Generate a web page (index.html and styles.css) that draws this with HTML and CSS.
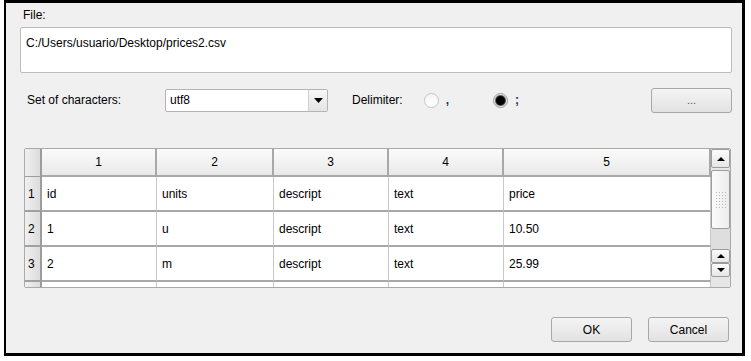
FILE: index.html
```html
<!DOCTYPE html>
<html>
<head>
<meta name="viewport" content="width=device-width, initial-scale=1">
<link rel="stylesheet" href="styles.css">
</head>
<body>

<div class="dialog">
  <div class="file-label">File:</div>
  <div class="file-box">C:/Users/usuario/Desktop/prices2.csv</div>

  <div class="options">
    <span class="charset-label">Set of characters:</span>
    <div class="combo">
      <span class="combo-text">utf8</span>
      <span class="combo-arrow"><svg width="9" height="5" viewBox="0 0 9 5"><path d="M0 0H9L4.5 5Z" fill="#000"/></svg></span>
    </div>
    <span class="delim-label">Delimiter:</span>
    <span class="radio"></span>
    <span class="radio-text">,</span>
    <span class="radio checked"></span>
    <span class="radio-text">;</span>
    <button class="btn btn-browse">...</button>
  </div>

  <div class="table">
    <div class="grid">
      <div class="corner"></div>
      <div class="head">1</div>
      <div class="head">2</div>
      <div class="head">3</div>
      <div class="head">4</div>
      <div class="head">5</div>

      <div class="rownum">1</div>
      <div class="cell">id</div>
      <div class="cell">units</div>
      <div class="cell">descript</div>
      <div class="cell">text</div>
      <div class="cell">price</div>

      <div class="rownum">2</div>
      <div class="cell">1</div>
      <div class="cell">u</div>
      <div class="cell">descript</div>
      <div class="cell">text</div>
      <div class="cell">10.50</div>

      <div class="rownum">3</div>
      <div class="cell">2</div>
      <div class="cell">m</div>
      <div class="cell">descript</div>
      <div class="cell">text</div>
      <div class="cell">25.99</div>

      <div class="rownum"></div>
      <div class="cell"></div>
      <div class="cell"></div>
      <div class="cell"></div>
      <div class="cell"></div>
      <div class="cell"></div>
    </div>
    <div class="scrollbar">
      <div class="sb-btn sb-first"><svg width="8" height="4" viewBox="0 0 8 4"><path d="M0 4H8L4 0Z" fill="#000"/></svg></div>
      <div class="sb-thumb"><span class="grip"></span></div>
      <div class="sb-track"></div>
      <div class="sb-btn sb-small"><svg width="8" height="4" viewBox="0 0 8 4"><path d="M0 4H8L4 0Z" fill="#000"/></svg></div>
      <div class="sb-btn sb-small"><svg width="8" height="4" viewBox="0 0 8 4"><path d="M0 0H8L4 4Z" fill="#000"/></svg></div>
    </div>
  </div>

  <div class="buttons">
    <button class="btn">OK</button>
    <button class="btn">Cancel</button>
  </div>
</div>

</body>
</html>
```

FILE: styles.css
```css
body {
  margin: 0;
  background: white;
  font-family: 'Liberation Sans', 'Arial', sans-serif;
  font-size: 12px;
  color: black;
}

.dialog {
  width: 736px;
  height: 350px;
  margin-left: 4px;
  border-style: solid;
  border-color: black;
  border-width: 3px 3px 3px 2px;
  background: #f0f0f0;
  display: flex;
  flex-direction: column;
}

.file-label {
  margin: 5px 0 0 17px;
  line-height: 14px;
}

.file-box {
  margin: 5px 0 0 14px;
  width: 705px;
  height: 36px;
  padding: 8px 0 0 5px;
  border: 1px solid #bcbcbc;
  border-radius: 2px;
  background: white;
  line-height: 14px;
}

.options {
  margin: 14px 10px 0 21px;
  height: 26px;
  display: flex;
  align-items: center;
}

.charset-label {
  width: 138px;
}

.combo {
  width: 161px;
  height: 21px;
  border: 1px solid #b4b4b4;
  border-radius: 2px;
  background: white;
  display: flex;
}

.combo-text {
  flex: 1;
  padding-left: 4px;
  line-height: 21px;
}

.combo-arrow {
  width: 18px;
  border-left: 1px solid #cfcfcf;
  background: linear-gradient(#f7f7f7, #e4e4e4);
  display: flex;
  align-items: center;
  justify-content: center;
}

.delim-label {
  margin-left: 24px;
}

.radio {
  width: 13px;
  height: 13px;
  margin-left: 21px;
  border: 1px solid #c4c4c4;
  border-radius: 50%;
  background: linear-gradient(#f4f4f4, #ffffff);
}

.radio.checked {
  margin-left: 44px;
  border-color: #9a9a9a;
  background: radial-gradient(circle, #000 0, #000 4px, #5a5a5a 5px, #e8e8e8 6px);
}

.radio-text {
  margin-left: 7px;
  color: #1c2c6c;
  font-weight: bold;
}

.btn {
  width: 81px;
  height: 25px;
  border: 1px solid #a8a8a8;
  border-radius: 3px;
  background: linear-gradient(#f4f4f4, #e2e2e2);
  font-family: 'Liberation Sans', 'Arial', sans-serif;
  font-size: 12px;
  color: black;
  padding: 0;
}

.btn-browse {
  margin-left: auto;
  font-size: 11px;
  color: #555;
}

.table {
  margin: 35px 0 0 18px;
  width: 705px;
  height: 138px;
  border: 1px solid #a9a9a9;
  border-radius: 2px;
  display: flex;
  overflow: hidden;
}

.grid {
  width: 686px;
  display: grid;
  grid-template-columns: 17px 115px 117px 115px 115px 207px;
  grid-template-rows: 28px repeat(4, 35px);
  background: white;
  overflow: hidden;
}

.corner,
.rownum {
  background: linear-gradient(to right, #f0f0f0, #dcdcdc);
  border-right: 2px solid #9c9c9c;
  border-bottom: 1px solid #9c9c9c;
  box-sizing: border-box;
}

.rownum {
  padding-left: 3px;
  display: flex;
  align-items: center;
  border-bottom: 2px solid #a0a0a0;
}

.head {
  background: linear-gradient(#fbfbfb, #e9e9e9);
  border-right: 2px solid #a8a8a8;
  border-bottom: 2px solid #a8a8a8;
  box-sizing: border-box;
  display: flex;
  align-items: center;
  justify-content: center;
}

.cell {
  border-right: 1px solid #c9c9c9;
  border-bottom: 2px solid #a8a8a8;
  box-sizing: border-box;
  padding-left: 5px;
  display: flex;
  align-items: center;
}

.scrollbar {
  width: 19px;
  display: flex;
  flex-direction: column;
  background: #e6e6e6;
}

.sb-btn {
  box-sizing: border-box;
  border: 1px solid #9c9c9c;
  border-radius: 2px;
  background: linear-gradient(#fbfbfb, #e6e6e6);
  display: flex;
  align-items: center;
  justify-content: center;
}

.sb-first {
  height: 19px;
}

.sb-small {
  height: 14px;
}

.sb-thumb {
  height: 59px;
  margin-top: 2px;
  box-sizing: border-box;
  border: 1px solid #9c9c9c;
  border-radius: 2px;
  background: linear-gradient(to right, #fbfbfb, #ececec);
  display: flex;
  align-items: center;
  justify-content: center;
}

.grip {
  width: 12px;
  height: 18px;
  background-image: radial-gradient(circle, #b8b8b8 0.8px, transparent 1px);
  background-size: 3px 3px;
}

.sb-track {
  height: 20px;
  background-image: radial-gradient(circle, #d2d2d2 0.6px, transparent 0.8px);
  background-size: 2px 2px;
}

.buttons {
  margin: 29px 13px 0 0;
  display: flex;
  justify-content: flex-end;
  gap: 16px;
}
```
